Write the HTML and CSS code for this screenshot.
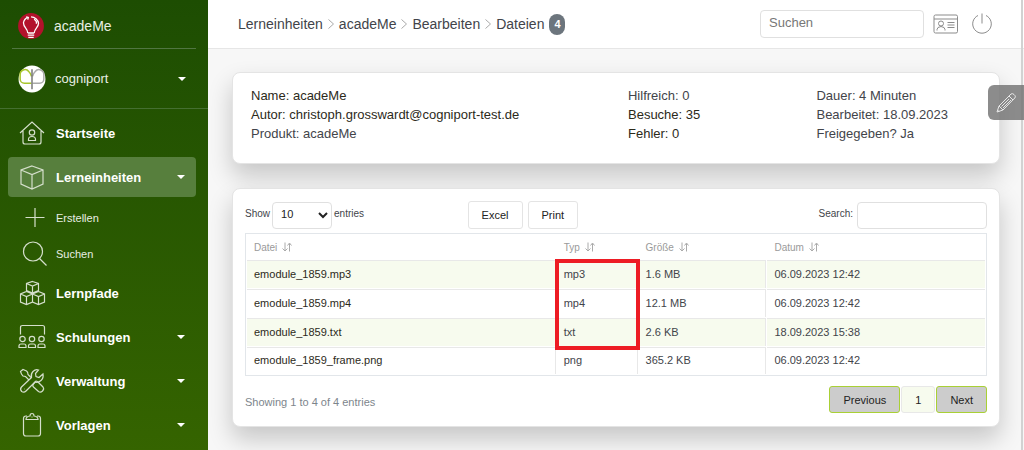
FILE: index.html
```html
<!DOCTYPE html>
<html lang="de">
<head>
<meta charset="utf-8">
<title>acadeMe – Dateien</title>
<link rel="stylesheet" href="styles.css">
</head>
<body>
<div class="layout">
  <aside class="sidebar">
    <a class="brand" href="#">
      <svg class="round-icon" viewBox="0 0 26 26" aria-hidden="true">
        <circle cx="13" cy="13" r="12" fill="#b3122b"/>
        <g fill="none" stroke="#fff" stroke-width="1.200">
          <path d="M10 19.500c0-4-4-5-4-9.500a6.500 6.500 0 0 1 4-5M13 4.500a7 7 0 0 1 7 6c0 4-4 5-4 9M10 19.500h6M10 21.500h6M10.500 23.500h5"/>
          <path d="M8.500 4.500l2 .5-.5 2M16 6.500l2 2.500v2"/>
        </g>
      </svg>
      <span>acadeMe</span>
    </a>
    <button class="account" type="button">
      <svg class="round-icon" viewBox="0 0 26 26" aria-hidden="true">
        <circle cx="13" cy="13" r="12.500" fill="#fff"/>
        <g fill="none" stroke-width="1.400">
          <path d="M12.500 17H6a4 4 0 0 1-4-4V9a4.500 4.500 0 0 1 8-3q2 2 2.500 4.500" stroke="#a8c62c"/>
          <path d="M13.500 17H20a4 4 0 0 0 4-4V9a4.500 4.500 0 0 0-8-3q-2 2-2.500 4.500" stroke="#aaa"/>
          <path d="M13 4v18.500" stroke="#777"/>
        </g>
      </svg>
      <span class="grow">cogniport</span>
      <i class="caret"></i>
    </button>
    <nav class="nav">
      <a class="nav-item" href="#">
        <svg class="nav-icon" viewBox="0 0 28 28" aria-hidden="true"><path d="M2 14 14 3l12 11M5 12v11q0 2 2 2h14q2 0 2-2V12M10.500 21.500v-1q0-3 3.500-3t3.500 3v1z"/><circle cx="14" cy="13.500" r="2.700"/></svg>
        <span class="grow">Startseite</span>
      </a>
      <a class="nav-item active" href="#">
        <svg class="nav-icon" viewBox="0 0 28 28" aria-hidden="true"><path d="M14 3 25 7v14l-11 5L3 21V7zM3 7l11 4.500L25 7M14 11.500V26"/></svg>
        <span class="grow">Lerneinheiten</span>
        <i class="caret"></i>
      </a>
      <div class="subnav">
        <a class="sub-item" href="#">
          <svg class="nav-icon" viewBox="0 0 28 28" aria-hidden="true"><path d="M14 4v19M4.500 13.500h19"/></svg>
          <span>Erstellen</span>
        </a>
        <a class="sub-item" href="#">
          <svg class="nav-icon" viewBox="0 0 28 28" aria-hidden="true"><circle cx="12" cy="11.500" r="9.500"/><path d="m18.500 18.500 7 7"/></svg>
          <span>Suchen</span>
        </a>
      </div>
      <a class="nav-item" href="#">
        <svg class="nav-icon" viewBox="0 0 28 28" aria-hidden="true"><path d="m14.500 2.500 6 2v7l-6 2.500-6-2.500v-7zM8.500 4.500l6 2.500 6-2.500M14.500 7v7M8.500 12.500l6 2.500v8l-6 2.500-6-2.500v-8zM2.500 15l6 2.500 6-2.500M8.500 17.500v8M20.500 12.500l6 2.500v8l-6 2.500-6-2.500v-8zM14.500 15l6 2.500 6-2.500M20.500 17.500v8"/></svg>
        <span class="grow">Lernpfade</span>
      </a>
      <a class="nav-item" href="#">
        <svg class="nav-icon" viewBox="0 0 28 28" aria-hidden="true"><path d="M2.500 11.500V4.500q0-2 2-2h20q2 0 2 2v7M1 24.500v-1.500q0-2 2-2h3q2 0 2 2v1.500zM10.500 24.500v-1.500q0-2 2-2h3q2 0 2 2v1.500zM20 24.500v-1.500q0-2 2-2h3q2 0 2 2v1.500z"/><circle cx="4.500" cy="16" r="2.700"/><circle cx="14" cy="16" r="2.700"/><circle cx="23.500" cy="16" r="2.700"/></svg>
        <span class="grow">Schulungen</span>
        <i class="caret"></i>
      </a>
      <a class="nav-item" href="#">
        <svg class="nav-icon" viewBox="0 0 28 28" aria-hidden="true"><path d="M13 10.500 10 7.500Q10 5 8.500 4L5 2.500 2.500 4.500 3.500 7 5 9l2.500.5 3.500 3.500M15.500 17l2.500-3q1.500 0 2.500 1.500l4.500 4.500q1.500 2-.5 4t-4 .5L15.500 20q-1.500-1.500 0-3"/><path d="M13.500 10.500Q12.500 7 15 4.500t5.500-1.500L17.500 6.500l.5 3 3 1L25 7q.8 4-2 6.500T17 15L8 24Q6 26 3.700 24.500 1.500 22 3.500 20z"/><path d="M6 22h.5"/></svg>
        <span class="grow">Verwaltung</span>
        <i class="caret"></i>
      </a>
      <a class="nav-item" href="#">
        <svg class="nav-icon" viewBox="0 0 28 28" aria-hidden="true"><path d="M9 5H8Q5.500 5 5.500 7.500v15Q5.500 25 8 25h12q2.500 0 2.500-2.500v-15Q22.500 5 20 5h-1M8 8.500h12q0-3-4-3.500 0-2.500-2-2.500T12 5q-4 .5-4 3.500zM13.500 6h1"/></svg>
        <span class="grow">Vorlagen</span>
        <i class="caret"></i>
      </a>
    </nav>
  </aside>

  <div class="page">
    <header class="topbar">
      <nav class="breadcrumb" aria-label="Breadcrumb">
        <a href="#">Lerneinheiten</a>
        <svg class="chevron" viewBox="0 0 8 12" aria-hidden="true"><path d="m1.500 1.500 5 4.500-5 4.500"/></svg>
        <a href="#">acadeMe</a>
        <svg class="chevron" viewBox="0 0 8 12" aria-hidden="true"><path d="m1.500 1.500 5 4.500-5 4.500"/></svg>
        <a href="#">Bearbeiten</a>
        <svg class="chevron" viewBox="0 0 8 12" aria-hidden="true"><path d="m1.500 1.500 5 4.500-5 4.500"/></svg>
        <span class="current">Dateien <b class="count">4</b></span>
      </nav>
      <input class="site-search" type="search" placeholder="Suchen" aria-label="Suchen">
      <button class="icon-button" type="button" aria-label="Profil">
        <svg class="card-icon" viewBox="0 0 26 22" aria-hidden="true"><rect x="1" y="2" width="23.500" height="18" rx="1.500"/><path d="M1 6h23.500M4 17.500v-1q0-2.500 4-3 4 .5 4 3v1M14.500 9.500h7M14.500 12h7M14.500 14.500h7"/><circle cx="8" cy="10.500" r="2.500"/></svg>
      </button>
      <button class="icon-button" type="button" aria-label="Abmelden">
        <svg class="power-icon" viewBox="0 0 22 22" aria-hidden="true"><path d="M7 2.500a9.300 9.300 0 1 0 8 0M11 .5v10"/></svg>
      </button>
    </header>

    <main class="content">
      <section class="card details">
        <div class="strong">
          <div>Name: acadeMe</div>
          <div>Autor: christoph.grosswardt@cogniport-test.de</div>
          <div class="soft">Produkt: acadeMe</div>
        </div>
        <div class="strong">
          <div class="soft">Hilfreich: 0</div>
          <div>Besuche: 35</div>
          <div>Fehler: 0</div>
        </div>
        <div>
          <div>Dauer: 4 Minuten</div>
          <div>Bearbeitet: 18.09.2023</div>
          <div>Freigegeben? Ja</div>
        </div>
      </section>

      <section class="card files">
        <div class="toolbar">
          <div class="length">
            <label for="length">Show</label>
            <select id="length"><option>10</option><option>25</option><option>50</option></select>
            <span>entries</span>
          </div>
          <div class="exports">
            <button class="btn" type="button">Excel</button>
            <button class="btn" type="button">Print</button>
          </div>
          <div class="filter">
            <label for="filter">Search:</label>
            <input id="filter" type="search">
          </div>
        </div>

        <div class="table-wrap">
          <table>
            <thead>
              <tr>
                <th class="col-file">Datei <svg class="sort" viewBox="0 0 10 10" aria-hidden="true"><path d="M3 .5v8M.5 6.500l2.500 2.500 2.500-2.500M7.500 9.500v-8M5.500 3.500l2-2.500 2 2.500"/></svg></th>
                <th class="col-type">Typ <svg class="sort" viewBox="0 0 10 10" aria-hidden="true"><path d="M3 .5v8M.5 6.500l2.500 2.500 2.500-2.500M7.500 9.500v-8M5.500 3.500l2-2.500 2 2.500"/></svg></th>
                <th class="col-size">Größe <svg class="sort" viewBox="0 0 10 10" aria-hidden="true"><path d="M3 .5v8M.5 6.500l2.500 2.500 2.500-2.500M7.500 9.500v-8M5.500 3.500l2-2.500 2 2.500"/></svg></th>
                <th>Datum <svg class="sort" viewBox="0 0 10 10" aria-hidden="true"><path d="M3 .5v8M.5 6.500l2.500 2.500 2.500-2.500M7.500 9.500v-8M5.500 3.500l2-2.500 2 2.500"/></svg></th>
              </tr>
            </thead>
            <tbody>
              <tr><td>emodule_1859.mp3</td><td>mp3</td><td>1.6 MB</td><td>06.09.2023 12:42</td></tr>
              <tr><td>emodule_1859.mp4</td><td>mp4</td><td>12.1 MB</td><td>06.09.2023 12:42</td></tr>
              <tr><td>emodule_1859.txt</td><td>txt</td><td>2.6 KB</td><td>18.09.2023 15:38</td></tr>
              <tr><td>emodule_1859_frame.png</td><td>png</td><td>365.2 KB</td><td>06.09.2023 12:42</td></tr>
            </tbody>
          </table>
          <div class="highlight"></div>
        </div>

        <div class="table-footer">
          <span class="summary">Showing 1 to 4 of 4 entries</span>
          <div class="pagination">
            <button class="page-button step" type="button">Previous</button>
            <button class="page-button" type="button">1</button>
            <button class="page-button step" type="button">Next</button>
          </div>
        </div>
      </section>
    </main>
  </div>
</div>
<div class="edge"></div>
<button class="edit-tab" type="button" aria-label="Bearbeiten">
  <svg class="pencil" viewBox="0 0 22 22" aria-hidden="true"><path d="m2 20 2-6L16 2q1.500-1 3 .5l.8.8q1.200 1.500 0 2.700L8 18zM4 14l4 4M14 4l4 4M6.500 14.500 14 7M8 16l8-8M2.500 18l1.500 1.500"/></svg>
</button>
</body>
</html>
```
FILE: styles.css
```css
* { box-sizing: border-box; }

body {
  margin: 0;
  font-family: "Liberation Sans", Arial, sans-serif;
  font-size: 13px;
  color: #42444a;
  background: #f7f7f7;
}

button, input, select { font: inherit; color: inherit; }
button { cursor: pointer; }
a { color: inherit; text-decoration: none; }
.grow { flex: 1; }

.layout { display: flex; min-height: 100vh; }

/* Sidebar */
.sidebar {
  flex: 0 0 208px;
  color: #fff;
  background: linear-gradient(#1d4d02, #356400);
}

.brand {
  display: flex;
  align-items: center;
  gap: 9px;
  height: 49px;
  margin: 0 12px;
  padding: 4px 0 0 5px;
  font-size: 14px;
  color: #e8eee4;
  border-bottom: 1px solid #517642;
}

.account {
  display: flex;
  align-items: center;
  gap: 9px;
  width: 100%;
  height: 60px;
  padding: 0 22px 0 18px;
  text-align: left;
  color: #e8eee4;
  background: none;
  border: 0;
  border-bottom: 1px solid #456f31;
}

.round-icon { width: 28px; height: 28px; flex: none; }

.caret {
  border: 4px solid transparent;
  border-top-color: #fff;
  border-bottom: 0;
}

.nav { padding: 4px 12px 4px 8px; }

.nav-item {
  display: flex;
  align-items: center;
  gap: 10px;
  height: 40px;
  margin-bottom: 4px;
  padding: 0 11px 0 10px;
  font-weight: bold;
  border-radius: 4px;
}

.nav-item.active { background: #577f3d; }

.nav-icon {
  flex: none;
  width: 28px;
  height: 28px;
  fill: none;
  stroke: #d5dfcc;
  stroke-width: 1.2;
}

.sub-item {
  display: flex;
  align-items: center;
  gap: 7px;
  height: 36px;
  padding-left: 13px;
  font-size: 11px;
  color: #e8eee4;
}

.subnav { margin-top: -4px; padding: 3px 0 1px; }

/* Top bar */
.page { flex: 1; min-width: 0; }

.topbar {
  display: flex;
  align-items: center;
  height: 49px;
  padding: 0 31px 0 30px;
  background: #fff;
  border-bottom: 1px solid #e6e6e6;
}

.breadcrumb {
  display: flex;
  flex: 1;
  align-items: center;
  gap: 4px;
  font-size: 14px;
}

.chevron {
  width: 8px;
  height: 12px;
  fill: none;
  stroke: #aaa;
}

.current { display: flex; align-items: center; gap: 5px; }

.count {
  width: 16px;
  font-size: 11px;
  line-height: 21px;
  text-align: center;
  color: #fff;
  background: #6c757d;
  border-radius: 8px;
}

.site-search {
  width: 164px;
  height: 28px;
  padding: 0 8px 3px;
  background: #fff;
  border: 1px solid #e0e0e0;
  border-radius: 4px;
}

.site-search::placeholder { color: #777; }

.icon-button {
  display: flex;
  margin-left: 9px;
  padding: 0;
  background: none;
  border: 0;
}

.icon-button + .icon-button { margin-left: 12px; }

.card-icon, .power-icon { fill: none; stroke: #8b8b8b; }
.card-icon { width: 26px; height: 22px; }
.power-icon { width: 22px; height: 22px; }

/* Cards */
.content { padding: 23px 24px; }

.card {
  background: #fff;
  border: 1px solid #e4e4e4;
  border-radius: 8px;
  box-shadow: 0 12px 24px rgba(0, 0, 0, 0.2);
}

.details {
  display: grid;
  grid-template-columns: 50.4% 25.2% 1fr;
  margin-bottom: 24px;
  padding: 13px 0 20px 18px;
  line-height: 19px;
}

.strong { color: #2c2a1a; }
.soft { color: #42444a; }

.files { padding: 12px 12px 13px; font-size: 11px; }

.toolbar {
  display: grid;
  grid-template-columns: 30% 1fr auto;
  align-items: center;
  font-size: 10px;
}

.length, .exports, .filter { display: flex; align-items: center; }
.length { gap: 2px; }
.exports { gap: 5px; }
.filter { gap: 4px; }
.toolbar label, .length span { padding-bottom: 3px; }

.length select {
  width: 60px;
  height: 27px;
  padding: 0 0 2px 4px;
  font-size: 11px;
  color: #222;
  background: #fff;
  border: 1px solid #e0e0e0;
  border-radius: 4px;
}

.filter input {
  width: 130px;
  height: 27px;
  background: #fff;
  border: 1px solid #e0e0e0;
  border-radius: 4px;
}

.btn {
  height: 28px;
  padding: 0 13px;
  font-size: 11px;
  color: #222;
  background: #fff;
  border: 1px solid #e4e4e4;
  border-radius: 3px;
}

/* Table */
.table-wrap { position: relative; margin-top: 4px; }

table {
  width: 100%;
  table-layout: fixed;
  border: 1px solid #e2e6ea;
  border-collapse: separate;
  border-spacing: 1px;
}

th, td { padding: 0 7px; text-align: left; }

th {
  height: 24px;
  font-size: 10px;
  font-weight: normal;
  color: #9a9a9a;
}

td {
  height: 28px;
  padding-bottom: 2px;
  border-top: 1px solid #e8e8e8;
  border-right: 1px solid #e8e8e8;
}

td:last-child { border-right: 0; }
td:first-child { color: #2c2a1a; }
tbody tr:nth-child(odd) td { background: #f7fbee; }
tbody tr:last-child td { height: 27px; }

.col-file { width: 42%; }
.col-type { width: 11%; }
.col-size { width: 17.4%; }

.sort {
  width: 10px;
  height: 10px;
  margin-left: 2px;
  vertical-align: -1px;
  fill: none;
  stroke: #aaa;
}

.highlight {
  position: absolute;
  top: 28px;
  left: 42%;
  width: 11%;
  height: 87px;
  outline: 4px solid #ed1c24;
  outline-offset: -2px;
  pointer-events: none;
}

.table-footer {
  display: flex;
  align-items: center;
  justify-content: space-between;
  margin-top: 10px;
}

.summary { color: #7d858c; padding-top: 4px; }
.pagination { display: flex; gap: 1px; }

.page-button {
  height: 27px;
  padding: 0 13px;
  color: #222;
  background: #f7fbee;
  border: 1px solid #e8e8e8;
  border-radius: 3px;
}

.page-button.step { background: #ccc; border-color: #a9d035; }

/* Window edge and edit tab */
.edge {
  position: fixed;
  top: 0;
  right: 1px;
  bottom: 0;
  width: 2px;
  background: #d2d2d2;
}

.edit-tab {
  position: fixed;
  top: 85px;
  right: 0;
  display: flex;
  align-items: center;
  width: 36px;
  height: 35px;
  padding: 0 0 0 7px;
  background: rgba(120, 120, 120, 0.85);
  border: 0;
  border-radius: 6px 0 0 6px;
}

.pencil {
  width: 22px;
  height: 22px;
  fill: none;
  stroke: #e6e6e6;
}
```
